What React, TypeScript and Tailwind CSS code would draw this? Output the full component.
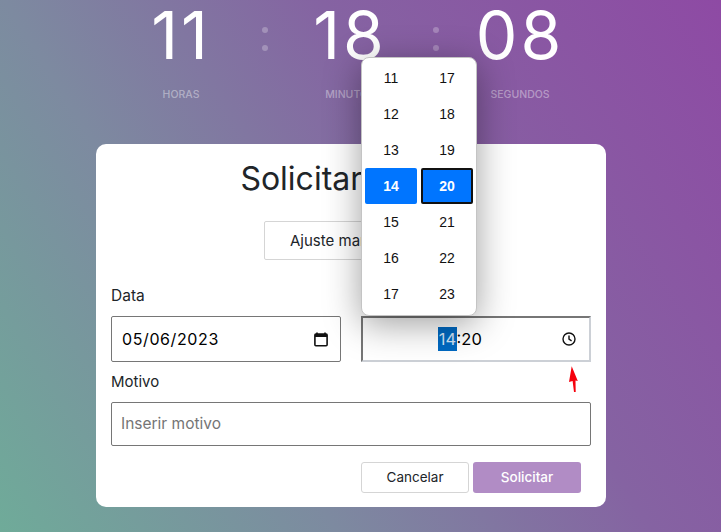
import React from 'react';

const font = "font-['Inter','Noto_Sans',sans-serif]";
const hoursA = ['11', '12', '13', '14', '15', '16', '17'];
const minsB = ['17', '18', '19', '20', '21', '22', '23'];

const TimeUnit: React.FC<{ value: string; label: string; className: string }> = ({ value, label, className }) => (
    <div className={`flex flex-col items-center ${className}`}>
        <div className="h-[70px] text-[66px] leading-[70px] tracking-[3px] text-white">{value}</div>
        <div className="mt-[18px] text-[10.5px] font-medium leading-[14px] text-white/40">{label}</div>
    </div>
);

const Colon: React.FC = () => (
    <div className="flex w-[6px] flex-col gap-[12px] pt-[27px]">
        <span className="h-[6px] w-[6px] rounded-full bg-white/25" />
        <span className="h-[6px] w-[6px] rounded-full bg-white/25" />
    </div>
);

const CalendarIcon = () => (
    <svg width="14" height="15" viewBox="0 0 14 15" fill="none">
        <path d="M3 0.5v2M11 0.5v2" stroke="#111" strokeWidth="1.6" />
        <rect x="0.9" y="2" width="12.2" height="11.8" rx="1" stroke="#111" strokeWidth="1.6" />
        <rect x="1" y="2" width="12" height="3" fill="#111" />
    </svg>
);

const ClockIcon = () => (
    <svg width="14" height="14" viewBox="0 0 14 14" fill="none" stroke="#111" strokeWidth="1.4">
        <circle cx="7" cy="7" r="6" />
        <path d="M7 3.4V7.2L9.6 8.8" />
    </svg>
);

const PickerCell: React.FC<{ value: string; selected?: boolean; focused?: boolean }> = ({ value, selected, focused }) => (
    <div
        className={`flex h-9 w-[52px] items-center justify-center rounded-[2px] font-['Liberation_Sans',sans-serif] text-[14px] ${
            selected ? 'bg-[#0075ff] font-bold text-white' : 'text-[#111]'
        } ${focused ? 'border-2 border-[#111]' : ''}`}
    >
        {value}
    </div>
);

export default function App() {
    return (
        <div className={`relative h-[532px] w-[721px] overflow-hidden bg-[linear-gradient(58deg,#6fab99_0%,#7d8aa0_32%,#8563a2_62%,#8e4aa4_100%)] ${font}`}>
            <div className="flex h-[144px] items-start pl-[131px]">
                <TimeUnit value="11" label="HORAS" className="w-[100px]" />
                <div className="w-[31px]" />
                <Colon />
                <div className="w-[32px]" />
                <TimeUnit value="18" label="MINUTOS" className="w-[100px]" />
                <div className="w-[33px]" />
                <Colon />
                <div className="w-[31px]" />
                <TimeUnit value="08" label="SEGUNDOS" className="w-[100px]" />
            </div>

            <div className="ml-[96px] flex h-[363px] w-[510px] flex-col rounded-[10px] bg-white px-[15px]">
                <h1 className="mt-[15px] h-[40px] text-center text-[32px] leading-[40px] text-[#212529]">Solicitar ajuste</h1>
                <div className="mt-[22px] flex justify-center">
                    <div className="flex h-[39px] w-[174px] items-center rounded-[2px] border border-[#d5d5d5] pl-[25px] pt-[1px] text-[15px] text-[#212529]">
                        Ajuste manual
                    </div>
                </div>
                <div className="mt-[26px] grid grid-cols-2 gap-x-[20px]">
                    <div>
                        <label className="block h-[20px] text-[15.5px] leading-[20px] text-[#212529]">Data</label>
                        <div className="mt-[10px] flex h-[46px] items-center justify-between rounded-[2px] border border-[#767676] pl-[10px] pr-[12px] text-[16px] tracking-[0.6px] text-black">
                            <span>05/06/2023</span>
                            <CalendarIcon />
                        </div>
                    </div>
                    <div className="pt-[30px]">
                        <div className="relative flex h-[46px] items-center justify-center border-2 border-b-[#ccd0d6] border-l-[#767676] border-r-[#ccd0d6] border-t-[#767676] pr-[32px] text-[16.5px] text-black">
                            <span className="bg-[#0069c2] px-[0.5px] text-[#cfe3f7]">14</span>
                            <span>:20</span>
                            <span className="absolute right-[13px] top-[14px]">
                                <ClockIcon />
                            </span>
                        </div>
                    </div>
                </div>
                <label className="mt-[10px] block h-[20px] text-[15px] leading-[20px] text-[#212529]">Motivo</label>
                <div className="mt-[10px] flex h-[44px] items-center rounded-[2px] border border-[#767676] px-[9px] text-[15.5px] text-[#757575]">
                    Inserir motivo
                </div>
                <div className="mt-[16px] flex justify-end gap-[4px] pr-[10px]">
                    <button className="h-[31px] w-[108px] rounded-[3px] border border-[#d5d5d5] bg-white text-[13.5px] text-[#212529]">Cancelar</button>
                    <button className="h-[31px] w-[108px] rounded-[3px] bg-[#b18cc5] text-[13.5px] font-medium text-white">Solicitar</button>
                </div>
            </div>

            {/* native time picker popup */}
            <div className="absolute left-[361px] top-[57px] grid w-[116px] grid-cols-[52px_52px] justify-center gap-x-[4px] rounded-[8px] border border-[#c4c4c4] bg-white pb-[3px] pt-[2px] shadow-[0_8px_36px_rgba(0,0,0,0.38)]">
                {hoursA.map((h, i) => (
                    <React.Fragment key={h}>
                        <PickerCell value={h} selected={h === '14'} />
                        <PickerCell value={minsB[i]} selected={minsB[i] === '20'} focused={minsB[i] === '20'} />
                    </React.Fragment>
                ))}
            </div>

            {/* red annotation arrow */}
            <svg className="absolute left-[567px] top-[366px]" width="14" height="28" viewBox="0 0 14 28">
                <path d="M4.7 0.3L10.8 15L8.5 14.6L8.7 26H7L5.6 15L2 16Z" fill="#f5000c" />
            </svg>
        </div>
    );
}
